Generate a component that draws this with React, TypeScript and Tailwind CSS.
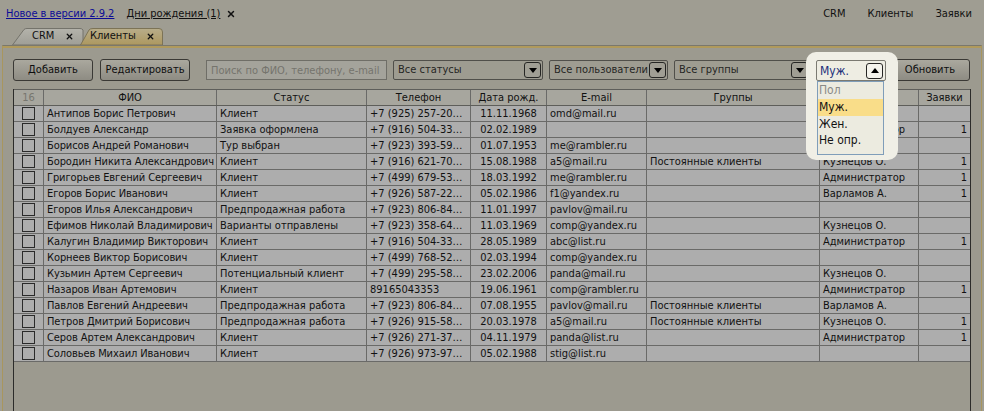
import { X } from "lucide-react";

type Row = {
  name: string;
  status: string;
  phone: string;
  birth: string;
  email: string;
  group: string;
  manager: string;
  orders: string;
};

const rows: Row[] = [
  { name: "Антипов Борис Петрович", status: "Клиент", phone: "+7 (925) 257-20…", birth: "11.11.1968", email: "omd@mail.ru", group: "", manager: "", orders: "" },
  { name: "Болдуев Александр", status: "Заявка оформлена", phone: "+7 (916) 504-33…", birth: "02.02.1989", email: "", group: "", manager: "Администратор", orders: "1" },
  { name: "Борисов Андрей Романович", status: "Тур выбран", phone: "+7 (923) 393-59…", birth: "01.07.1953", email: "me@rambler.ru", group: "", manager: "", orders: "" },
  { name: "Бородин Никита Александрович", status: "Клиент", phone: "+7 (916) 621-70…", birth: "15.08.1988", email: "a5@mail.ru", group: "Постоянные клиенты", manager: "Кузнецов О.", orders: "1" },
  { name: "Григорьев Евгений Сергеевич", status: "Клиент", phone: "+7 (499) 679-53…", birth: "18.03.1992", email: "me@rambler.ru", group: "", manager: "Администратор", orders: "1" },
  { name: "Егоров Борис Иванович", status: "Клиент", phone: "+7 (926) 587-22…", birth: "05.02.1986", email: "f1@yandex.ru", group: "", manager: "Варламов А.", orders: "1" },
  { name: "Егоров Илья Александрович", status: "Предпродажная работа", phone: "+7 (923) 806-84…", birth: "11.01.1997", email: "pavlov@mail.ru", group: "", manager: "", orders: "" },
  { name: "Ефимов Николай Владимирович", status: "Варианты отправлены", phone: "+7 (923) 358-64…", birth: "11.03.1969", email: "comp@yandex.ru", group: "", manager: "Кузнецов О.", orders: "" },
  { name: "Калугин Владимир Викторович", status: "Клиент", phone: "+7 (916) 504-33…", birth: "28.05.1989", email: "abc@list.ru", group: "", manager: "Администратор", orders: "1" },
  { name: "Корнеев Виктор Борисович", status: "Клиент", phone: "+7 (499) 768-52…", birth: "02.03.1994", email: "comp@yandex.ru", group: "", manager: "", orders: "" },
  { name: "Кузьмин Артем Сергеевич", status: "Потенциальный клиент", phone: "+7 (499) 295-58…", birth: "23.02.2006", email: "panda@mail.ru", group: "", manager: "Кузнецов О.", orders: "" },
  { name: "Назаров Иван Артемович", status: "Клиент", phone: "89165043353", birth: "19.06.1961", email: "comp@rambler.ru", group: "", manager: "Администратор", orders: "1" },
  { name: "Павлов Евгений Андреевич", status: "Предпродажная работа", phone: "+7 (923) 806-84…", birth: "07.08.1955", email: "pavlov@mail.ru", group: "Постоянные клиенты", manager: "Варламов А.", orders: "" },
  { name: "Петров Дмитрий Борисович", status: "Предпродажная работа", phone: "+7 (926) 915-58…", birth: "20.03.1978", email: "a5@mail.ru", group: "Постоянные клиенты", manager: "Кузнецов О.", orders: "1" },
  { name: "Серов Артем Александрович", status: "Клиент", phone: "+7 (926) 271-37…", birth: "04.11.1979", email: "panda@list.ru", group: "", manager: "Администратор", orders: "1" },
  { name: "Соловьев Михаил Иванович", status: "Клиент", phone: "+7 (926) 973-97…", birth: "05.02.1988", email: "stig@list.ru", group: "", manager: "", orders: "" },
];

const cols =
  "grid grid-cols-[30px_173px_150px_104px_76px_100px_173px_99px_51px]";

function ArrowBox({ up, light }: { up?: boolean; light?: boolean }) {
  return (
    <div
      className={`flex h-[16px] w-[17px] items-center justify-center rounded-[3px] border border-[#262624] ${
        light ? "bg-[#f4f3ec]" : "bg-[#a09e94]"
      }`}
    >
      <svg width="8" height="5" viewBox="0 0 8 5">
        {up ? (
          <polygon points="0,5 8,5 4,0" fill="#000" />
        ) : (
          <polygon points="0,0 8,0 4,5" fill="#000" />
        )}
      </svg>
    </div>
  );
}

function Select({ label, className }: { label: string; className: string }) {
  return (
    <div
      className={`flex h-[20px] items-center justify-between rounded-[2px] border border-[#504f4a] bg-[#9e9c91] pl-[4px] pr-[1px] ${className}`}
    >
      <span className="truncate text-[11px] text-[#262624]">{label}</span>
      <ArrowBox />
    </div>
  );
}

function Button({ label, className }: { label: string; className: string }) {
  return (
    <button
      className={`flex h-[22px] items-center justify-center rounded-[3px] border border-[#3a3935] bg-gradient-to-b from-[#aaa89e] to-[#8e8c83] text-[11px] text-[#0e0e0e] ${className}`}
    >
      {label}
    </button>
  );
}

function Cell({
  children,
  className = "",
  last,
}: {
  children?: React.ReactNode;
  className?: string;
  last?: boolean;
}) {
  return (
    <div
      className={`h-[15px] overflow-hidden whitespace-nowrap px-[3px] leading-[15px] ${
        last ? "" : "border-r border-[#6a6a68]"
      } ${className}`}
    >
      {children}
    </div>
  );
}

export default function App() {
  return (
    <div className="relative flex h-[411px] w-[984px] flex-col overflow-hidden bg-[#9f9d92] font-['DejaVu_Sans_Condensed','Liberation_Sans',Arial,sans-serif] text-[11px] text-[#111]">
      {/* top bar */}
      <div className="flex h-[28px] items-center justify-between pl-[6px] pr-[12px]">
        <div className="flex items-center">
          <span className="text-[#0c0c96] underline">Новое в версии 2.9.2</span>
          <span className="ml-[12px] underline">Дни рождения (1)</span>
          <X size={10} strokeWidth={3.5} className="ml-[6px]" />
        </div>
        <div className="flex items-center gap-[22px]">
          <span>CRM</span>
          <span>Клиенты</span>
          <span>Заявки</span>
        </div>
      </div>

      {/* tabs */}
      <div className="flex h-[17px] pl-[12px]">
        <div className="relative h-[17px] w-[72px]">
          <svg className="absolute inset-0" width="72" height="17" viewBox="0 0 72 17">
            <defs>
              <linearGradient id="gCrm" x1="0" y1="0" x2="0" y2="1">
                <stop offset="0" stopColor="#b4b3ab" />
                <stop offset="1" stopColor="#9f9e96" />
              </linearGradient>
            </defs>
            <path d="M0.5,17 L12,1.5 Q13,0.5 15,0.5 L68,0.5 Q70,0.5 71,2 L71,17 Z" fill="url(#gCrm)" stroke="#74736b" />
          </svg>
          <div className="relative flex h-full items-center pl-[20px]">
            <span>CRM</span>
            <X size={9} strokeWidth={3.5} className="ml-[11px]" />
          </div>
        </div>
        <div className="relative -ml-[4px] h-[17px] w-[83px]">
          <svg className="absolute inset-0" width="83" height="17" viewBox="0 0 83 17">
            <defs>
              <linearGradient id="gCl" x1="0" y1="0" x2="0" y2="1">
                <stop offset="0" stopColor="#b8ad8a" />
                <stop offset="1" stopColor="#ad985f" />
              </linearGradient>
            </defs>
            <path d="M0.5,17 L9,2 Q10,0.5 13,0.5 L79,0.5 Q82.5,0.5 82.5,4 L82.5,17 Z" fill="url(#gCl)" stroke="#7c7356" />
          </svg>
          <div className="relative flex h-full items-center pl-[10px]">
            <span>Клиенты</span>
            <X size={9} strokeWidth={3.5} className="ml-[10px]" />
          </div>
        </div>
      </div>

      {/* panel */}
      <div className="mx-[2px] flex flex-1 flex-col border-x border-t border-x-[#a8965e] border-t-[#7a786d] bg-[#9c9a8f]">
        <div className="h-[2px] bg-[#b09a5c]" />
        <div className="ml-[10px] mt-[11px] flex items-center">
          <Button label="Добавить" className="w-[80px]" />
          <Button label="Редактировать" className="ml-[7px] w-[90px]" />
          <input
            placeholder="Поиск по ФИО, телефону, e-mail"
            className="ml-[16px] h-[20px] w-[181px] border border-[#6f6e67] bg-[#a4a39b] px-[4px] text-[11px] outline-none placeholder:text-[#75746d]"
          />
          <Select label="Все статусы" className="ml-[6px] w-[150px]" />
          <Select label="Все пользователи" className="ml-[6px] w-[119px]" />
          <Select label="Все группы" className="ml-[6px] w-[136px]" />
          <div className="ml-[6px] w-[70px]" />
          <Button label="Обновить" className="ml-[4px] w-[80px]" />
        </div>

        {/* table */}
        <div className="ml-[10px] mr-[10px] mt-[8px] flex-1 border-x border-[#2c2c2a]">
          <div className={`${cols} border-y border-[#5e5e5a] bg-[#a7a69e] text-center`}>
            <Cell className="text-[#77766f]">16</Cell>
            <Cell>ФИО</Cell>
            <Cell>Статус</Cell>
            <Cell>Телефон</Cell>
            <Cell>Дата рожд.</Cell>
            <Cell>E-mail</Cell>
            <Cell>Группы</Cell>
            <Cell>Менеджер</Cell>
            <Cell last>Заявки</Cell>
          </div>
          {rows.map((r) => (
            <div key={r.name} className={`${cols} border-b border-[#6a6a68] bg-[#adadad]`}>
              <Cell className="flex items-center justify-center">
                <div className="h-[13px] w-[13px] border border-[#2a2a2a]" />
              </Cell>
              <Cell className="tracking-[-0.1px]">{r.name}</Cell>
              <Cell>{r.status}</Cell>
              <Cell>{r.phone}</Cell>
              <Cell className="text-center">{r.birth}</Cell>
              <Cell>{r.email}</Cell>
              <Cell>{r.group}</Cell>
              <Cell>{r.manager}</Cell>
              <Cell last className="text-right">
                {r.orders}
              </Cell>
            </div>
          ))}
        </div>
      </div>

      {/* highlighted gender dropdown */}
      <div className="absolute left-[806px] top-[52px] h-[108px] w-[92px] rounded-[10px] bg-[#f0efe6]">
        <div className="ml-[10px] mt-[8px] flex h-[21px] w-[70px] items-center justify-between rounded-[2px] border border-[#7b7a72] bg-[#eeede3] pl-[3px] pr-[2px]">
          <span className="text-[12px] text-[#1c2f7a]">Муж.</span>
          <ArrowBox up light />
        </div>
        <div className="ml-[11px] flex h-[74px] w-[67px] flex-col border border-[#7f9db9] bg-[#ecebe0] text-[12px]">
          <div className="h-[17px] pl-[1px] leading-[17px] text-[#8a8a86]">Пол</div>
          <div className="h-[17px] bg-[#f9dd89] pl-[1px] leading-[17px]">Муж.</div>
          <div className="h-[16px] pl-[1px] leading-[16px]">Жен.</div>
          <div className="h-[17px] pl-[1px] leading-[17px]">Не опр.</div>
        </div>
      </div>
    </div>
  );
}
